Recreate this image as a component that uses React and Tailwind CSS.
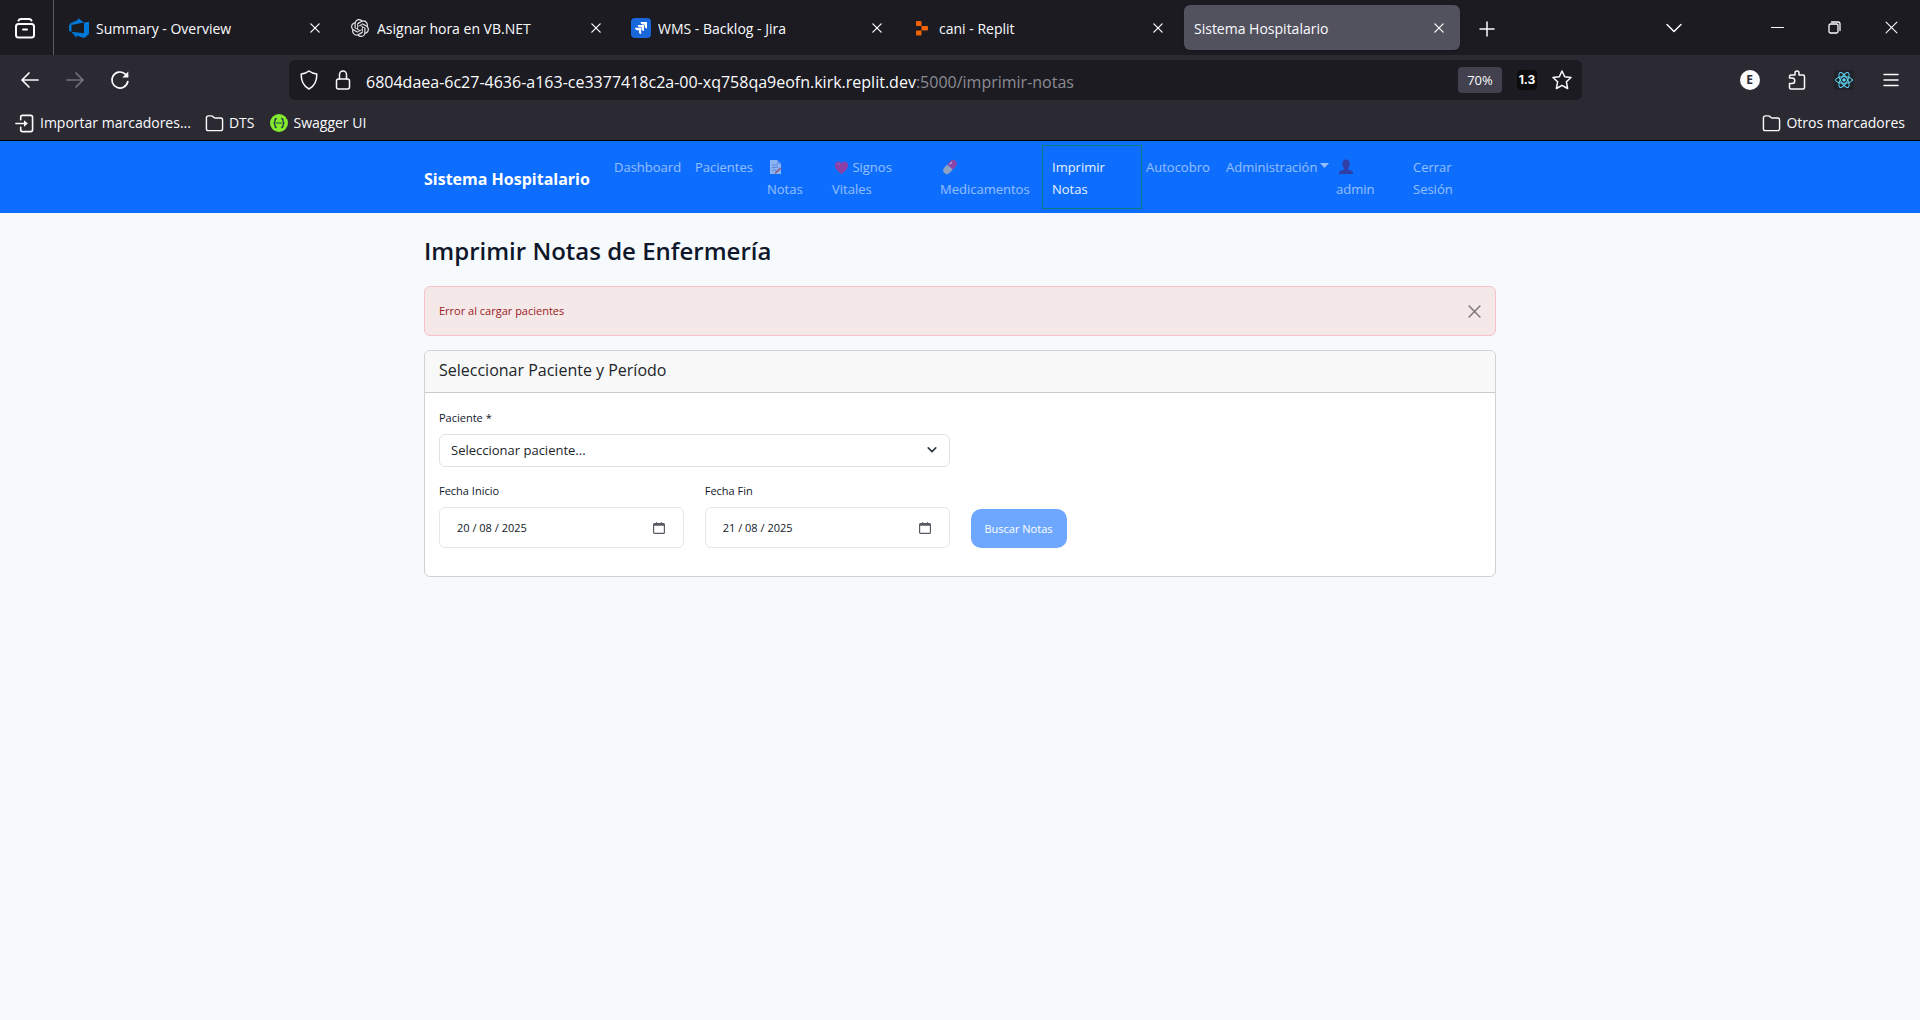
import React from "react";
import { SiOpenai } from "react-icons/si";

const Svg = ({ size = 20, children, className = "", box = 20, sw = 1.5 }) => (
  <svg
    width={size}
    height={size}
    viewBox={`0 0 ${box} ${box}`}
    fill="none"
    stroke="currentColor"
    strokeWidth={sw}
    strokeLinecap="round"
    strokeLinejoin="round"
    className={`shrink-0 ${className}`}
    aria-hidden="true"
  >
    {children}
  </svg>
);

const CloseIcon = ({ size = 11, sw = 1.5 }) => (
  <Svg size={size} box={12} sw={sw}>
    <path d="M1 1l10 10M11 1L1 11" />
  </Svg>
);

const AzureIcon = () => (
  <svg width="20" height="20" viewBox="0 0 24 24" fill="#0078d7" aria-hidden="true">
    <path d="M0 8.877L2.247 5.91l8.405-3.416V.022l7.37 5.393L2.966 8.338v8.225L0 15.707zm24-4.45v14.651l-5.753 4.9-9.303-3.057v3.056l-5.978-7.416 15.057 1.798V5.415z" />
  </svg>
);

const JiraIcon = () => (
  <svg width="20" height="20" viewBox="0 0 20 20" aria-hidden="true">
    <rect width="20" height="20" rx="4" fill="#1868db" />
    <g fill="#fff">
      <path d="M9.6 4H16v6.4c-1.5 0-2.4-1-2.4-2.4v-1.500H12C10.500 6.500 9.600 5.500 9.600 4z" />
      <path d="M6.800 6.900h6.200v6.200c-1.400 0-2.300-1-2.300-2.300V9.300H9.200C7.800 9.300 6.800 8.300 6.800 6.900z" />
      <path d="M4 9.800h6.200V16c-1.400 0-2.300-1-2.300-2.300v-1.500H6.400C5 12.200 4 11.200 4 9.800z" />
    </g>
  </svg>
);

const ReplitIcon = () => (
  <svg width="20" height="20" viewBox="0 0 20 20" fill="#f26207" aria-hidden="true">
    <path d="M4 4a1 1 0 0 1 1-1h3.500a1 1 0 0 1 1 1v4H5a1 1 0 0 1-1-1z" />
    <path d="M9.500 8H15a1 1 0 0 1 1 1v2.500a1 1 0 0 1-1 1H9.500z" />
    <path d="M4 13.500a1 1 0 0 1 1-1h4.500v4a1 1 0 0 1-1 1H5a1 1 0 0 1-1-1z" />
  </svg>
);

const FolderIcon = () => (
  <Svg size={19}>
    <path d="M1.500 4a2 2 0 0 1 2-2h3.300a2 2 0 0 1 1.300.5l1.300 1.200a2 2 0 0 0 1.300.5h5.800a2 2 0 0 1 2 2v9.300a2 2 0 0 1-2 2h-13a2 2 0 0 1-2-2z" />
  </Svg>
);

const ReactIcon = () => (
  <span className="flex size-5 items-center justify-center bg-[#20232a]">
    <Svg className="text-[#61dafb]" sw={1}>
      <ellipse cx="10" cy="10" rx="8.500" ry="3.300" />
      <ellipse cx="10" cy="10" rx="8.500" ry="3.300" transform="rotate(60 10 10)" />
      <ellipse cx="10" cy="10" rx="8.500" ry="3.300" transform="rotate(120 10 10)" />
      <circle cx="10" cy="10" r="1.200" fill="currentColor" />
    </Svg>
  </span>
);

const emoji = "ml-[2px] inline-block align-[-3px] opacity-60";

const NoteEmoji = () => (
  <svg width="14" height="16" viewBox="1 0 14 16" className={emoji} aria-hidden="true">
    <path d="M2 1h7l4 4v10H2z" fill="#dfe3ee" />
    <path d="M9 1v4h4z" fill="#a9b3d0" />
    <path d="M4 6h6M4 8.500h6M4 11h4" stroke="#8f9bbf" />
    <path d="M7 13l5-4.500 1.500 1.200-5 4.500L6.500 15z" fill="#e0603a" />
  </svg>
);

const HeartEmoji = () => (
  <svg width="15" height="15" viewBox="0 0 16 16" className={emoji} aria-hidden="true">
    <path d="M8 15C3 11 1 8.500 1 5.500a3.700 3.700 0 0 1 7-1.700 3.700 3.700 0 0 1 7 1.700C15 8.500 13 11 8 15z" fill="#e0226f" />
    <path d="M3.500 5.500c.3-1.200 1.500-1.800 2.500-1.300" stroke="#f27ba9" fill="none" />
  </svg>
);

const PillEmoji = () => (
  <svg width="16" height="16" viewBox="0 0 16 16" className={emoji} aria-hidden="true">
    <g transform="rotate(-48 8 8)">
      <path d="M8 4.300h4.500a3.700 3.700 0 0 1 0 7.400H8z" fill="#e5286b" />
      <path d="M8 4.300H3.500a3.700 3.700 0 0 0 0 7.400H8z" fill="#e6c49c" />
      <path d="M10 6h2.500" stroke="#fff" strokeLinecap="round" />
    </g>
  </svg>
);

const PersonEmoji = () => (
  <svg width="16" height="16" viewBox="0 0 16 16" className={emoji} fill="#4a1f6b" aria-hidden="true">
    <ellipse cx="8" cy="5" rx="3.600" ry="4.500" />
    <path d="M6 8h4v2.500l4 1.500c.8.400 1 1.500 1 3H1c0-1.500.2-2.600 1-3l4-1.500z" />
  </svg>
);

const tabs = [
  { title: "Summary - Overview", icon: <AzureIcon /> },
  { title: "Asignar hora en VB.NET", icon: <SiOpenai size={18} color="#e6e6e6" /> },
  { title: "WMS - Backlog - Jira", icon: <JiraIcon /> },
  { title: "cani - Replit", icon: <ReplitIcon /> },
  { title: "Sistema Hospitalario", active: true },
];

function TabStrip() {
  return (
    <div className="flex h-[55px] items-center bg-[#1c1b22]">
      <button aria-label="Vista de pestañas" className="flex h-full w-[54px] items-center justify-center border-r border-[#5b5b66] pr-1">
        <Svg size={22} box={22} sw={2}>
          <rect x="2" y="7" width="18" height="13.500" rx="2.500" />
          <path d="M4.500 3.500c.5-1 1.500-1.500 2.500-1.500h8c1 0 2 .5 2.500 1.500" />
          <path d="M9 12.500h4" />
        </Svg>
      </button>
      <div className="ml-[6px] flex gap-[5px]">
        {tabs.map((t) => (
          <div
            key={t.title}
            className={`flex h-[45px] w-[276px] items-center rounded-md pr-4 ${t.active ? "bg-[#52525e] pl-[10px] shadow" : "pl-[9px]"}`}
          >
            {t.icon && <span className="mr-[7px] flex w-5 justify-center">{t.icon}</span>}
            <span className="flex-1 truncate pt-[2px] text-sm">{t.title}</span>
            <button aria-label={`Cerrar ${t.title}`}>
              <CloseIcon size={10} />
            </button>
          </div>
        ))}
      </div>
      <button aria-label="Nueva pestaña" className="ml-[19px] pt-[2px]">
        <Svg size={16} box={16}>
          <path d="M8 1v14M1 8h14" />
        </Svg>
      </button>
      <div className="ml-auto flex h-full items-center">
        <button aria-label="Listar pestañas" className="mr-[67px]">
          <Svg size={16} box={16}>
            <path d="M1 4.500l7 7 7-7" />
          </Svg>
        </button>
        <button aria-label="Minimizar" className="flex w-[57px] justify-center">
          <Svg size={13} box={13} sw={1}>
            <path d="M.5 6.500h12" />
          </Svg>
        </button>
        <button aria-label="Restaurar" className="flex w-[57px] justify-center">
          <Svg size={13} box={13} sw={1.3}>
            <rect x="1" y="3" width="9" height="9" rx="1.500" />
            <path d="M3.500 1h6.500a2 2 0 0 1 2 2v6.500" />
          </Svg>
        </button>
        <button aria-label="Cerrar ventana" className="flex w-[57px] justify-center">
          <CloseIcon size={13} sw={1} />
        </button>
      </div>
    </div>
  );
}

function Toolbar() {
  return (
    <div className="flex h-[50px] items-center pr-[6px]">
      <div className="flex w-[289px] pl-[7px]">
        <button aria-label="Atrás" className="flex w-[45px] justify-center">
          <Svg sw={1.7}>
            <path d="M18 10H2M9 3L2 10l7 7" />
          </Svg>
        </button>
        <button aria-label="Adelante" disabled className="flex w-[45px] justify-center text-[#74737b]">
          <Svg sw={1.700}>
            <path d="M2 10h16M11 3l7 7-7 7" />
          </Svg>
        </button>
        <button aria-label="Recargar" className="flex w-[45px] justify-center">
          <Svg sw={1.700}>
            <path d="M17.800 11.500A8 8 0 1 1 15 3.800l2.500 2.400" />
            <path d="M18.300 1.500v6h-6z" fill="currentColor" stroke="none" />
          </Svg>
        </button>
      </div>
      <div className="flex h-10 min-w-0 flex-1 items-center rounded-md bg-[#1c1b22] px-[10px]">
        <Svg className="mr-[14px]">
          <path d="M10 1c2 1.700 4.500 2.600 7.800 3 .2 6.500-2.300 12-7.800 15C4.500 16 2 10.500 2.200 4 5.500 3.600 8 2.700 10 1z" />
        </Svg>
        <Svg className="mr-[13px]">
          <rect x="3.500" y="9" width="13" height="10" rx="2" />
          <path d="M6.500 9V4.500a3.500 3.500 0 0 1 7 0V9" />
        </Svg>
        <div className="flex-1 truncate pt-[3px] text-base">
          6804daea-6c27-4636-a163-ce3377418c2a-00-xq758qa9eofn.kirk.replit.dev<span className="text-[#8c8b92]">:5000/imprimir-notas</span>
        </div>
        <button className="mr-[15px] flex h-[26px] w-11 items-center justify-center rounded bg-[#42414d] pt-[2px] text-[13px]">70%</button>
        <button className="mr-[15px] flex size-5 items-center justify-center rounded bg-[#0c0c0d] font-['Inter'] text-xs font-bold">
          1.3
        </button>
        <button aria-label="Añadir a marcadores">
          <Svg>
            <path d="M10 1l2.700 5.700 6.300.800-4.600 4.300 1.200 6.700-5.600-3.200-5.600 3.200 1.200-6.700L1 7.500l6.300-.800z" />
          </Svg>
        </button>
      </div>
      <div className="ml-[144px] flex">
        <button aria-label="Cuenta" className="flex w-[47px] justify-center">
          <span className="flex size-5 items-center justify-center rounded-full bg-[#fbfbfe] text-xs font-bold text-[#2b2a33]">E</span>
        </button>
        <button aria-label="Extensiones" className="flex w-[47px] justify-center">
          <Svg>
            <path d="M2.500 8V6.500a1.500 1.500 0 0 1 1.500-1.500h4V3a2 2 0 0 1 4 0v2h4a1.500 1.500 0 0 1 1.500 1.500v11A1.500 1.500 0 0 1 16 19H4a1.500 1.500 0 0 1-1.500-1.500v-4H5a2.700 2.700 0 0 0 0-5.500z" />
          </Svg>
        </button>
        <button aria-label="React Developer Tools" className="flex w-[47px] justify-center">
          <ReactIcon />
        </button>
        <button aria-label="Menú" className="flex w-[47px] items-center justify-center">
          <Svg size={16} box={16}>
            <path d="M1 2.500h14M1 8h14M1 13.500h14" />
          </Svg>
        </button>
      </div>
    </div>
  );
}

function Bookmarks() {
  return (
    <div className="flex h-9 items-center border-b border-black px-[15px] pt-px text-sm">
      <button className="flex items-center gap-[6px]">
        <Svg size={19} sw={1.7}>
          <path d="M6 6V3.500a2 2 0 0 1 2-2h8.500a2 2 0 0 1 2 2v13a2 2 0 0 1-2 2H8a2 2 0 0 1-2-2V14" />
          <path d="M1 10h9" />
          <path d="M9.500 6.500L13.500 10l-4 3.500z" fill="currentColor" stroke="none" />
        </Svg>
        Importar marcadores...
      </button>
      <button className="ml-[14px] flex items-center gap-[5px]">
        <FolderIcon />
        DTS
      </button>
      <button className="ml-4 flex items-center gap-[5px]">
        <svg width="18" height="18" viewBox="0 0 20 20" fill="none" stroke="#173647" strokeWidth="1.400" aria-hidden="true">
          <circle cx="10" cy="10" r="10" fill="#85ea2d" stroke="none" />
          <path d="M7.500 5c-2 0-2 .7-2 2.500S5 10 4 10c1 0 1.500.7 1.500 2.500s0 2.500 2 2.500M12.500 5c2 0 2 .7 2 2.500S15 10 16 10c-1 0-1.500.7-1.500 2.500s0 2.500-2 2.500" />
          <path d="M7.300 10h5.400" strokeDasharray="1.300 .8" />
        </svg>
        Swagger UI
      </button>
      <button className="ml-auto flex items-center gap-[5px]">
        <FolderIcon />
        Otros marcadores
      </button>
    </div>
  );
}

const navLink = "shrink-0 px-[7px] pt-2 pb-[6px] text-white/55";

function SiteNav() {
  return (
    <nav className="bg-[#0d6dfd] py-[7px]">
      <div className="mx-auto flex max-w-[1072px] text-[13px] leading-[22px]">
        <a href="#inicio" className="w-[183px] shrink-0 self-center pt-1 text-base font-bold text-white">
          Sistema Hospitalario
        </a>
        <a href="#dashboard" className={`${navLink} w-[81px]`}>Dashboard</a>
        <a href="#pacientes" className={`${navLink} w-[72px]`}>Pacientes</a>
        <a href="#notas" className={`${navLink} w-[65px]`}>
          <NoteEmoji />
          <br />
          Notas
        </a>
        <a href="#signos" className={`${navLink} w-[108px]`}>
          <HeartEmoji /> Signos
          <br />
          Vitales
        </a>
        <a href="#medicamentos" className={`${navLink} w-[112px]`}>
          <PillEmoji />
          <br />
          Medicamentos
        </a>
        <a
          href="#imprimir"
          className="w-[94px] shrink-0 px-[7px] pt-2 pb-[6px] text-white/90 outline outline-1 outline-offset-2 outline-[#0d7a80]"
        >
          Imprimir
          <br />
          Notas
        </a>
        <a href="#autocobro" className={`${navLink} w-[80px]`}>Autocobro</a>
        <button className={`${navLink} flex w-[110px] items-start whitespace-nowrap`}>
          Administración
          <svg width="9" height="5" viewBox="0 0 9 5" className="mt-[7px] ml-[3px] shrink-0" fill="currentColor" aria-hidden="true">
            <path d="M0 0h9L4.500 5z" />
          </svg>
        </button>
        <a href="#admin" className={`${navLink} w-[77px]`}>
          <PersonEmoji />
          <br />
          admin
        </a>
        <a href="#salir" className={navLink}>
          Cerrar
          <br />
          Sesión
        </a>
      </div>
    </nav>
  );
}

function DateField({ id, label, value }) {
  return (
    <div>
      <label htmlFor={id} className="mb-[7px] block leading-[18px]">{label}</label>
      <div className="flex h-[41px] items-center rounded-md border border-[#e5e7eb] bg-white pr-[18px] pl-[17px]">
        <input id={id} type="text" defaultValue={value} className="min-w-0 flex-1 bg-transparent pt-[2px] text-[11px] text-[#0f172a] outline-none" />
        <button type="button" aria-label={`Abrir calendario de ${label}`} className="text-[#5b5b66]">
          <Svg size={12} box={12} sw={1.200}>
            <rect x=".6" y="1.600" width="10.800" height="9.800" rx="1" />
            <path d="M1 2.300h10M1 3.200h10M3.500.6v1.500M8.500.6v1.500" />
          </Svg>
        </button>
      </div>
    </div>
  );
}

export default function App() {
  return (
    <div className="flex min-h-screen flex-col bg-[#f7fafd] font-['Open_Sans','Noto_Sans',sans-serif]">
      <header className="bg-[#2b2a33] text-[#fbfbfe]">
        <TabStrip />
        <Toolbar />
        <Bookmarks />
      </header>
      <SiteNav />
      <main className="mx-auto w-full max-w-[1072px] text-[11px] text-[#0f172a]">
        <h1 className="mt-[21px] text-2xl leading-[34px] font-semibold">Imprimir Notas de Enfermería</h1>
        <div role="alert" className="mt-[18px] flex h-[50px] items-center justify-between rounded-md border border-[#f5c2c7] bg-[#f5e8e8] px-[14px] text-[#991b1b]">
          <span className="pt-px">Error al cargar pacientes</span>
          <button aria-label="Cerrar alerta" className="text-[#7d7777]">
            <CloseIcon size={13} sw={1.400} />
          </button>
        </div>
        <section className="mt-[14px] rounded-md border border-[#d0d1d3] bg-white">
          <h2 className="rounded-t-md border-b border-[#c9cacb] bg-[#f8f8f8] px-[14px] pt-[7px] pb-[10px] text-base leading-6 text-[#212529]">
            Seleccionar Paciente y Período
          </h2>
          <form className="grid grid-cols-4 gap-x-[21px] gap-y-[15px] px-[14px] pt-4 pb-7">
            <div className="col-span-2">
              <label htmlFor="paciente" className="mb-[7px] block leading-[18px]">Paciente *</label>
              <div className="relative">
                <select
                  id="paciente"
                  className="h-[33px] w-full appearance-none rounded-md border border-[#dee2e6] bg-white px-[11px] pt-px text-[13px] text-[#212529]"
                >
                  <option>Seleccionar paciente...</option>
                </select>
                <Svg size={10} box={12} sw={2} className="pointer-events-none absolute top-[11px] right-[13px] text-[#343a40]">
                  <path d="M1.500 3.500L6 8l4.500-4.500" />
                </Svg>
              </div>
            </div>
            <div className="col-span-2" />
            <DateField id="inicio" label="Fecha Inicio" value="20 / 08 / 2025" />
            <DateField id="fin" label="Fecha Fin" value="21 / 08 / 2025" />
            <div className="flex items-end">
              <button type="button" className="h-[39px] rounded-[10px] bg-[#6ea8fe] px-[14px] pt-[2px] text-white">
                Buscar Notas
              </button>
            </div>
          </form>
        </section>
      </main>
    </div>
  );
}
